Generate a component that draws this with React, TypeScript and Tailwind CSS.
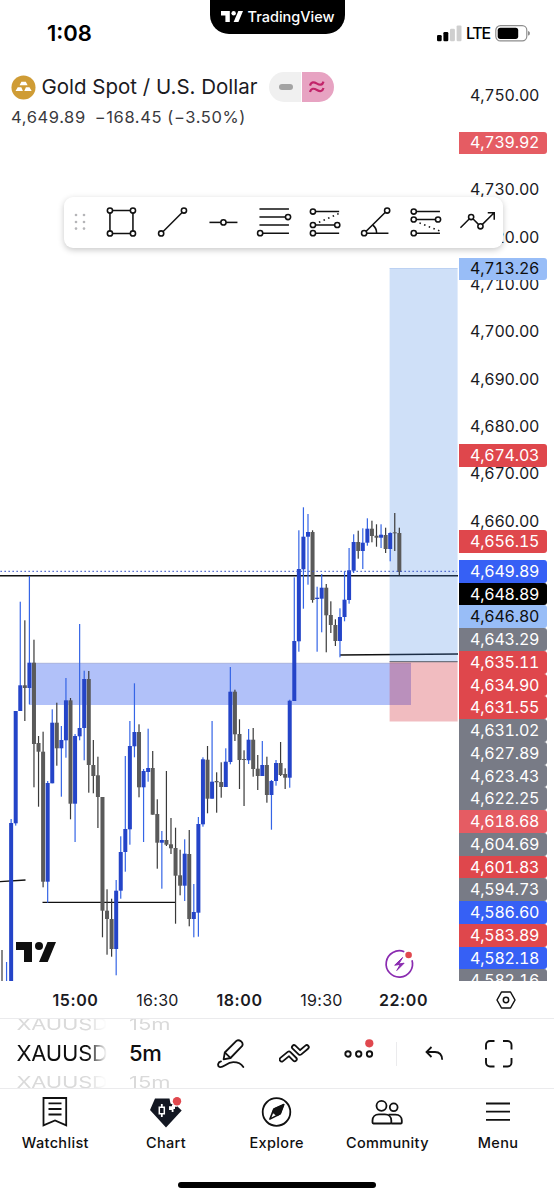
import type { ReactNode } from "react";
import { clsx } from "clsx";

type Candle = [dir: 0 | 1, high: number, top: number, bottom: number, low: number];

// 1 = up (blue), 0 = down (grey). Values are y positions on the pane.
const CANDLES: Candle[] = [
  [0, 950, 981, 981, 981],
  [1, 962, 981, 981, 981],
  [1, 819, 823, 981, 981],
  [1, 711, 711, 823.3, 825.6],
  [1, 601.7, 685.3, 711, 711],
  [0, 620.3, 685.3, 688, 721],
  [1, 576, 662.7, 688, 704.3],
  [0, 639.7, 662.7, 744, 787.3],
  [0, 736, 743, 751.7, 806.7],
  [0, 731.7, 751.7, 881.7, 887.3],
  [1, 781, 783, 881.7, 902.7],
  [1, 709.3, 722.7, 783.3, 783.3],
  [0, 702.7, 722.7, 748.3, 765.7],
  [1, 726, 740, 748.3, 796.7],
  [1, 678, 700.3, 740.3, 757.7],
  [0, 698, 700.3, 803.7, 819.3],
  [1, 734, 736, 803.7, 842],
  [1, 624, 728, 736.3, 740.3],
  [1, 670.7, 679, 728, 760.3],
  [0, 671, 679, 765, 792.7],
  [0, 740, 765, 776, 793.3],
  [0, 756.7, 775.3, 797, 828],
  [0, 797, 797, 910.7, 937.3],
  [0, 889.3, 910.7, 919, 954.7],
  [0, 898.7, 919, 949, 956.7],
  [1, 880, 890.7, 949, 975.3],
  [1, 836.3, 852, 890.7, 898.7],
  [1, 756, 829, 852, 871.7],
  [1, 721, 746, 829.3, 844.7],
  [1, 683.3, 732, 746.3, 757.3],
  [0, 724.3, 732, 787.3, 797.3],
  [1, 769, 771, 787.3, 842],
  [1, 728.7, 768, 772, 781.7],
  [0, 751, 768, 814.7, 814.7],
  [0, 799.3, 814, 842.7, 868.7],
  [1, 831, 840, 842.7, 888.7],
  [0, 771, 840, 844.7, 846],
  [0, 818, 844.3, 848.3, 854],
  [0, 827.7, 848, 875.7, 923.7],
  [0, 849.7, 875.3, 885.7, 895.3],
  [1, 839.3, 853.7, 885.7, 901],
  [0, 830, 854, 919, 926.3],
  [1, 884, 912, 919, 937.3],
  [1, 817, 824, 912.7, 936.7],
  [1, 757.3, 759.3, 824.3, 826.7],
  [0, 746, 759.7, 798.7, 813.3],
  [1, 721, 781.7, 798.7, 798.7],
  [0, 772.3, 781, 782.3, 812.7],
  [0, 762.3, 782, 787, 797.7],
  [1, 748.3, 761.7, 787, 787],
  [1, 667, 691.7, 762, 764.3],
  [0, 689.7, 691.7, 734.3, 741],
  [0, 719.3, 734, 760, 789],
  [0, 750.3, 759, 760, 806],
  [1, 729, 739.7, 760.3, 764],
  [0, 728, 739.7, 769, 776.7],
  [0, 755, 768.7, 776, 790],
  [1, 741, 765, 776, 776],
  [0, 756.7, 765, 795, 802.7],
  [1, 780, 781, 795, 829.7],
  [1, 760, 763, 781, 785.7],
  [0, 742, 763, 775, 776],
  [0, 768.3, 774, 777.7, 789],
  [1, 699.7, 700.7, 777.7, 787.7],
  [1, 577.3, 641, 701, 701],
  [1, 530.3, 569, 641.3, 651.7],
  [1, 507.3, 536.7, 569.3, 608.7],
  [1, 514, 532, 536.7, 584.7],
  [0, 530.3, 532, 600, 602.7],
  [1, 586.7, 597.7, 599, 651.7],
  [1, 574, 587.7, 598.7, 632.3],
  [0, 584, 587.7, 615.3, 652.3],
  [0, 601.3, 615, 625, 633],
  [0, 619.3, 625, 641, 646],
  [1, 608.3, 617, 641, 657.3],
  [1, 571.3, 599.7, 617, 621.3],
  [1, 548, 570.3, 600, 603.7],
  [1, 534.3, 542, 570.7, 573],
  [0, 530.7, 542, 551, 558.7],
  [1, 528.3, 542.7, 551, 569],
  [1, 518.3, 528.7, 542.7, 545.7],
  [0, 520.7, 528.7, 536, 542.3],
  [0, 524.3, 535.7, 537.7, 546.7],
  [1, 524.3, 534.7, 537.7, 548],
  [0, 527.7, 535, 549, 553],
  [1, 532.3, 533, 549, 561.3],
  [0, 513, 532.3, 533.3, 551],
  [0, 527.7, 533, 572, 575.3],
];

const STEP = 4.567;
const FIRST_X = 2;

const TICKS = [
  "4,750.00",
  "4,740.00",
  "4,730.00",
  "4,720.00",
  "4,710.00",
  "4,700.00",
  "4,690.00",
  "4,680.00",
  "4,670.00",
  "4,660.00",
];

const RED = "bg-[#df474c] text-white";
const PINK = "bg-[#e55c63] text-white";
const GREY = "bg-[#787b86] text-white";
const BLUE = "bg-[#3660f5] text-white";
const SKY = "bg-[#98bdf7] text-[#0f0f0f]";
const BLACK = "bg-black text-white";

const TAGS: [string, string][] = [
  ["4,649.89", BLUE],
  ["4,648.89", BLACK],
  ["4,646.80", SKY],
  ["4,643.29", GREY],
  ["4,635.11", RED],
  ["4,634.90", RED],
  ["4,631.55", RED],
  ["4,631.02", GREY],
  ["4,627.89", GREY],
  ["4,623.43", GREY],
  ["4,622.25", GREY],
  ["4,618.68", PINK],
  ["4,604.69", GREY],
  ["4,601.83", RED],
  ["4,594.73", GREY],
  ["4,586.60", BLUE],
  ["4,583.89", RED],
  ["4,582.18", BLUE],
  ["4,582.16", GREY],
];

const TIMES = ["15:00", "16:30", "18:00", "19:30", "22:00"];

function TvMark({ className }: { className?: string }) {
  return (
    <svg viewBox="0 0 40 20" className={className} fill="currentColor">
      <path d="M0 0h16v20H8V8H0z" />
      <circle cx="23" cy="4" r="4" />
      <path d="M31.5 0H40l-8.3 20H23z" />
    </svg>
  );
}

function StatusBar() {
  return (
    <header className="flex h-[68px] shrink-0 items-start justify-between">
      <div className="w-[210px] pt-[17px] pl-[47px] text-[22px] leading-8 font-semibold">1:08</div>
      <div className="flex h-[34px] w-[135px] items-center justify-center gap-[5px] rounded-b-[19px] bg-black pb-[1px] text-white">
        <TvMark className="h-[11px] w-[22px]" />
        <span className="text-[14.5px] font-medium">TradingView</span>
      </div>
      <div className="flex w-[209px] items-center pt-[25px] pl-[92px]">
        <svg viewBox="0 0 25 17" className="h-[17px] w-[25px]">
          <rect x="0" y="10" width="4.7" height="6.3" rx="1.2" />
          <rect x="6.4" y="7" width="4.9" height="9.3" rx="1.2" />
          <rect x="13" y="3.8" width="4.9" height="12.5" rx="1.2" fill="#cfcfcf" />
          <rect x="19.6" y="0.4" width="4.9" height="15.9" rx="1.2" fill="#cfcfcf" />
        </svg>
        <span className="ml-1 w-[29px] text-[16px] leading-[17px] font-medium tracking-[-1.2px]">LTE</span>
        <svg viewBox="0 0 36 17" className="h-[17px] w-[36px]">
          <rect x="0.8" y="0.7" width="31" height="15.2" rx="4.6" fill="none" stroke="#8d8d8d" strokeWidth="1.2" />
          <rect x="2.7" y="2.7" width="20.5" height="11.2" rx="2.6" />
          <path d="M33 6v4.6c1.6-.4 1.9-1.3 1.9-2.3S34.6 6.4 33 6z" fill="#8d8d8d" />
        </svg>
      </div>
    </header>
  );
}

function SymbolHeader() {
  return (
    <div className="absolute top-0 left-0 z-10 pl-[11px]">
      <div className="flex h-[38px] items-center">
        <svg viewBox="0 0 26 26" className="size-[25px]">
          <circle cx="13" cy="13" r="12.5" fill="#cf9c35" />
          <path
            d="M10.8 7h4.6l1.9 3.7H8.9zM7 12.8h3.7l1.7 3.8H4.7zM15.5 12.8h3.7l2.3 3.8h-7.7z"
            fill="#fff"
          />
        </svg>
        <span className="ml-[5.5px] text-[20.5px] text-[#1b1b1f]">Gold Spot / U.S. Dollar</span>
        <span className="ml-[11px] flex h-[30px] gap-px overflow-hidden rounded-full">
          <span className="flex w-8 items-center justify-center bg-[#f0f0f0] pl-[2px]">
            <span className="h-[5.5px] w-[14px] rounded-full bg-[#a3a3a3]" />
          </span>
          <span className="flex w-8 items-center bg-[#e7a3c2] pl-[6px]">
            <svg viewBox="0 0 18 14" className="h-[14px] w-[18px]" fill="none" stroke="#c2246a" strokeWidth="2.2">
              <path d="M2 5.6C3.2 1.4 6 1.9 9 3.6s5.5 1.6 6.5-2" />
              <path d="M2 12C3.2 7.8 6 8.3 9 10s5.5 1.6 6.5-2" />
            </svg>
          </span>
        </span>
      </div>
      <div className="flex h-[22px] gap-[9px] text-[16.5px] leading-[22px] tracking-[0.6px] text-[#3a3a3e]">
        <span>4,649.89</span>
        <span>−168.45 (−3.50%)</span>
      </div>
    </div>
  );
}

function Tool({ children }: { children: ReactNode }) {
  return (
    <svg
      viewBox="-25.45 -17 50.9 34"
      className="h-[34px] w-[50.9px] shrink-0"
      fill="#fff"
      stroke="#111"
      strokeWidth="1.55"
    >
      {children}
    </svg>
  );
}

function DrawingToolbar() {
  return (
    <div className="absolute top-[129px] left-[64px] z-20 flex h-[51px] w-[439px] items-center rounded-[9px] bg-white pb-[1px] pl-[10px] shadow-[0_2px_6px_rgba(0,0,0,0.22)]">
      <svg viewBox="0 0 12 18" className="h-[18px] w-3 shrink-0" fill="#b5b5b8">
        {[2, 9, 15.6].map((y) => (
          <g key={y}>
            <circle cx="2" cy={y} r="1.3" />
            <circle cx="10" cy={y} r="1.3" />
          </g>
        ))}
      </svg>
      <div className="ml-[10px] flex">
        <Tool>
          <path d="M-11.5-11.5h23v23h-23z" />
          <circle cx="-11.5" cy="-11.5" r="2.6" />
          <circle cx="11.5" cy="-11.5" r="2.6" />
          <circle cx="-11.5" cy="11.5" r="2.6" />
          <circle cx="11.5" cy="11.5" r="2.6" />
        </Tool>
        <Tool>
          <path d="M-11.3 11.5l23-23" />
          <circle cx="-11.3" cy="11.5" r="2.6" />
          <circle cx="11.5" cy="-11.5" r="2.6" />
        </Tool>
        <Tool>
          <path d="M-14 .4h28" />
          <circle cx="0" cy=".4" r="2.6" />
        </Tool>
        <Tool>
          <path d="M-15-13h29.5M-15-5h29.5M-15 3h29.5M-15 11.2h29.5" />
          <circle cx="13.6" cy="-5" r="2.6" />
          <circle cx="-14.3" cy="11.2" r="2.6" />
        </Tool>
        <Tool>
          <path d="M-12.5-10.500h26.2M-12.5 3h24M-12.5 11.2h26.2" />
          <path d="M-6.5 .3l20.5-9" strokeDasharray="1.5 3.5" />
          <circle cx="-12.5" cy="-10.5" r="2.6" />
          <circle cx="-12.5" cy="3" r="2.6" />
          <circle cx="11.8" cy="3" r="2.6" />
          <circle cx="-12.5" cy="11.2" r="2.6" />
        </Tool>
        <Tool>
          <path d="M11.7-11.5l-23 22.7H13" fill="none" />
          <path d="M-2.8 3c2.8 2 4 5 4 8.2" fill="none" />
          <circle cx="-11.3" cy="11.2" r="2.6" />
          <circle cx="11.7" cy="-11.5" r="2.6" />
        </Tool>
        <Tool>
          <path d="M-12.7-10.5h26.2M-12.7-2.5h24M-12.7 11.2h26.2" />
          <path d="M-7 .9l20 8" strokeDasharray="1.5 3.5" />
          <circle cx="-12.7" cy="-10.5" r="2.6" />
          <circle cx="-12.7" cy="-2.5" r="2.6" />
          <circle cx="11.6" cy="-2.5" r="2.6" />
          <circle cx="-12.7" cy="11.2" r="2.6" />
        </Tool>
        <Tool>
          <path d="M-17 5.7L-6.3-5 3 4.3 16.7-9.2M10.3-9.2h6.5v7" fill="none" />
          <circle cx="-6.3" cy="-5" r="2.6" />
          <circle cx="3" cy="4.3" r="2.6" />
        </Tool>
      </div>
    </div>
  );
}

function PriceChart() {
  return (
    <svg viewBox="0 68 459 913" className="h-[913px] w-[459px]">
      {/* demand zone */}
      <rect x="29" y="663" width="382" height="42" fill="#b1c1f9" />
      <path d="M29 663.2h382" stroke="#a9aecb" strokeWidth=".6" />

      <path d="M0 575.8h458" stroke="#111" strokeWidth="1.4" />
      <path d="M340 654.9L458 654" stroke="#111" strokeWidth="1.5" />
      <path d="M42.5 902.4H175" stroke="#111" strokeWidth="1.3" />
      <path d="M0 881.6L25.5 880" stroke="#111" strokeWidth="1.3" />

      {/* long position */}
      <rect x="389.6" y="268.5" width="68" height="393" fill="#3f82e3" fillOpacity=".25" />
      <rect x="389.6" y="661.5" width="68" height="60" fill="#d02030" fillOpacity=".3" />
      <path d="M389.6 268.5h68" stroke="#a9c4ee" strokeWidth=".7" />
      <path d="M389.6 661.6h68" stroke="#6f7480" strokeWidth="1.2" />

      {CANDLES.map(([up, high, top, bottom, low], i) => {
        const x = FIRST_X + i * STEP;
        return (
          <g key={i}>
            <rect x={x - 0.6} y={high} width="1.2" height={low - high} fill={up ? "#3565e6" : "#3a3a3a"} />
            <rect x={x - 2} y={top} width="4" height={bottom - top} fill={up ? "#2444c8" : "#5a5a5a"} />
          </g>
        );
      })}

      <path d="M0.5 571.3H457" stroke="#3450c8" strokeWidth="1.2" strokeDasharray="1.3 2.7" />

      <g transform="translate(399.3 964)">
        <path d="M5-12.3A13.2 13.2 0 1 0 12.7-3.8" fill="none" stroke="#8a2bb0" strokeWidth="1.7" />
        <path d="M3.3-6.5L-4.6 1.2 1 .4-2.5 6.5 4.8-.8-.6 0z" fill="#8a2bb0" stroke="#8a2bb0" strokeLinejoin="round" />
        <circle cx="9.3" cy="-9" r="3.3" fill="#e0484e" />
      </g>
    </svg>
  );
}

function PriceTag({ label, tone, className }: { label: string; tone: string; className?: string }) {
  return (
    <div className={clsx("flex h-[22.76px] w-[88px] items-center rounded-r-[3px] pb-[1px] pl-[11px]", tone, className)}>
      {label}
    </div>
  );
}

function PriceAxis() {
  return (
    <div className="relative w-[95px] text-[16px] tracking-[-0.2px] tabular-nums">
      <div className="flex flex-col pt-[3px]">
        {TICKS.map((t) => (
          <div key={t} className="flex h-[47.35px] items-center pl-[11px] text-[#1b1b1f]">
            {t}
          </div>
        ))}
      </div>
      <PriceTag label="4,739.92" tone={PINK} className="absolute top-[63.5px] left-0" />
      <PriceTag label="4,713.26" tone={SKY} className="absolute top-[189.6px] left-0" />
      <PriceTag label="4,674.03" tone={RED} className="absolute top-[376px] left-0" />
      <PriceTag label="4,656.15" tone={RED} className="absolute top-[462px] left-0" />
      <div className="absolute top-[491.9px] left-0 flex flex-col">
        {TAGS.map(([label, tone]) => (
          <PriceTag key={label} label={label} tone={tone} className="shrink-0" />
        ))}
      </div>
    </div>
  );
}

function TimeAxis() {
  return (
    <div className="flex h-[37px] shrink-0 items-center pl-[34.5px] text-[16px] text-[#1b1b1f]">
      {TIMES.map((t, i) => (
        <span
          key={t}
          className={clsx("w-[82px] text-center", i % 2 === 0 ? "font-semibold tracking-[0.6px]" : "font-normal tracking-[0.3px]")}
        >
          {t}
        </span>
      ))}
      <svg viewBox="0 0 20 18" className="ml-[51.5px] h-[18px] w-5" fill="none" stroke="#111" strokeWidth="1.5">
        <path d="M5.5 1h9L19 9l-4.5 8h-9L1 9z" strokeLinejoin="round" />
        <circle cx="10" cy="9" r="2.7" />
      </svg>
    </div>
  );
}

function Wheel({ rows, className }: { rows: [string, string, string]; className?: string }) {
  return (
    <div className={clsx("flex h-full flex-col items-start justify-center text-[22px] leading-[29px]", className)}>
      <span className="scale-y-75 text-[#dadada]">{rows[0]}</span>
      <span className="text-[#0f0f0f]">{rows[1]}</span>
      <span className="scale-y-75 text-[#dadada]">{rows[2]}</span>
    </div>
  );
}

function BottomToolbar() {
  return (
    <div className="flex h-[71px] shrink-0 items-center overflow-hidden border-y border-[#ebebed] pl-[16.5px]">
      <div className="h-full w-[90px] overflow-hidden [mask-image:linear-gradient(90deg,#000_78%,transparent_100%)]">
        <Wheel rows={["XAUUSD", "XAUUSD", "XAUUSD"]} className="tracking-[-0.2px]" />
      </div>
      <Wheel rows={["15m", "5m", "15m"]} className="ml-[22.5px] w-[60px] [&>span:nth-child(2)]:font-medium [&>span:nth-child(2)]:tracking-[-0.4px]" />
      <svg
        viewBox="0 0 28 30"
        className="ml-[28px] h-[30px] w-7"
        fill="none"
        stroke="#111"
        strokeWidth="1.8"
        strokeLinejoin="round"
        strokeLinecap="round"
      >
        <path d="M6.6 20.4l1.2-6.9L19.400 1.900c2.600-2 7.600 1.400 5.800 5L13.500 19z" />
        <path d="M8 13.700l5.400 5.100" />
        <path d="M4 22.4C.8 23 .2 27 2.500 28c4 1.200 7-4.800 13.800-4.800 4.700 0 8 1.600 10 4.800" />
      </svg>
      <svg
        viewBox="0 0 32 20"
        className="ml-[34px] h-5 w-8"
        fill="none"
        strokeLinejoin="round"
        strokeLinecap="round"
      >
        <path d="M2.700 15.500L10 9.500l5.700 5.700M15 3.200l6 5.600 6.700-5.600" stroke="#111" strokeWidth="5.900" />
        <path d="M2.700 15.500L10 9.500l5.700 5.700M15 3.200l6 5.600 6.700-5.600" stroke="#fff" strokeWidth="2.300" />
      </svg>
      <svg viewBox="0 0 32 30" className="ml-[33px] h-[30px] w-8" fill="none" stroke="#111" strokeWidth="1.9">
        <circle cx="4" cy="15" r="2.7" />
        <circle cx="14.7" cy="15" r="2.7" />
        <circle cx="25.500" cy="15" r="2.7" />
        <circle cx="25.300" cy="4.300" r="4.100" fill="#e0484e" stroke="none" />
      </svg>
      <span className="ml-5 h-6 w-px bg-[#ebebed]" />
      <svg viewBox="0 0 20 16" className="ml-[27.5px] h-4 w-5" fill="none" stroke="#111" strokeWidth="1.8">
        <path d="M6.5 1L1.500 6l5 5M1.500 6h8.500c4.500 0 7 2.500 7.200 7.800" />
      </svg>
      <svg viewBox="0 0 28 28" className="ml-[40px] size-7" fill="none" stroke="#111" strokeWidth="1.9">
        <path d="M1 9.500V5a4 4 0 0 1 4-4h4.500M18 1h4.500a4 4 0 0 1 4 4v4.500M26.500 18v4.500a4 4 0 0 1-4 4H18M9.500 26.500H5a4 4 0 0 1-4-4V18" />
      </svg>
    </div>
  );
}

function NavItem({ label, children }: { label: string; children: ReactNode }) {
  return (
    <div className="flex w-[110.7px] flex-col items-center">
      <svg viewBox="0 0 36 36" className="size-9" fill="none" stroke="#111" strokeWidth="1.8">
        {children}
      </svg>
      <span className="mt-[3px] text-[14.5px] leading-5 font-medium tracking-[0.35px] text-[#0f0f0f]">{label}</span>
    </div>
  );
}

function BottomNav() {
  return (
    <nav className="flex grow flex-col items-center justify-between pt-[5px] pb-[11px]">
      <div className="flex w-full">
        <NavItem label="Watchlist">
          <path d="M6.5 4h22.700v27.300L18 26.400 6.500 31.300z" />
          <path d="M11.500 9.300h13M11.500 15h13M11.500 20.500h13" />
        </NavItem>
        <NavItem label="Chart">
          <path d="M7 4.400h14.500l1 5.100 7 3 4.200 4L18 33.600 2 16z" fill="#131722" stroke="none" />
          <path d="M13.800 10v13" stroke="#fff" />
          <path d="M11.300 13.300h5v6.500h-5z" fill="#131722" stroke="#fff" strokeWidth="1.500" />
          <path d="M21 12.300h3v-1.800h5v2.200h-2V15h-1.500v3h-1.800v-2H21z" fill="#fff" stroke="none" />
          <circle cx="29" cy="7.300" r="4.200" fill="#e0484e" stroke="none" />
        </NavItem>
        <NavItem label="Explore">
          <circle cx="17.500" cy="18" r="13.800" />
          <path d="M24.800 10.500l-3.500 9.300L10.900 25.100l4-10.200z" strokeLinejoin="round" strokeWidth="1.600" />
          <path d="M24.800 10.500l-9.900 4.400-1.400 3.300 4.500 3.700 3.300-2.100z" fill="#111" strokeLinejoin="round" strokeWidth="1" />
        </NavItem>
        <NavItem label="Community">
          <circle cx="12.500" cy="11.800" r="5" />
          <circle cx="24.700" cy="13.300" r="3.900" />
          <path d="M3.500 28.600v-2c0-3.500 2.500-6.200 6.400-6.200h6c3.900 0 6.400 2.700 6.400 6.200v2c0 .6-.4.900-.9.900H4.400c-.5 0-.9-.3-.9-.9z" />
          <path d="M19.500 20.600h7c4 0 6.300 2.600 6.300 5.900v2c0 .7-.4 1-1 1h-9.600" />
        </NavItem>
        <NavItem label="Menu">
          <path d="M6 9.500h24M6 17.700h24M6 25.900h24" />
        </NavItem>
      </div>
      <span className="h-[6.5px] w-[198px] rounded-full bg-black" />
    </nav>
  );
}

export default function App() {
  return (
    <div className="flex h-[1199px] w-[554px] flex-col overflow-hidden bg-white font-['Inter','Liberation_Sans',sans-serif] text-black">
      <StatusBar />
      <main className="relative flex h-[913px] shrink-0 overflow-hidden">
        <SymbolHeader />
        <DrawingToolbar />
        <PriceChart />
        <PriceAxis />
        <TvMark className="absolute bottom-[19px] left-4 h-5 w-10 text-[#0f0f0f]" />
      </main>
      <TimeAxis />
      <BottomToolbar />
      <BottomNav />
    </div>
  );
}
